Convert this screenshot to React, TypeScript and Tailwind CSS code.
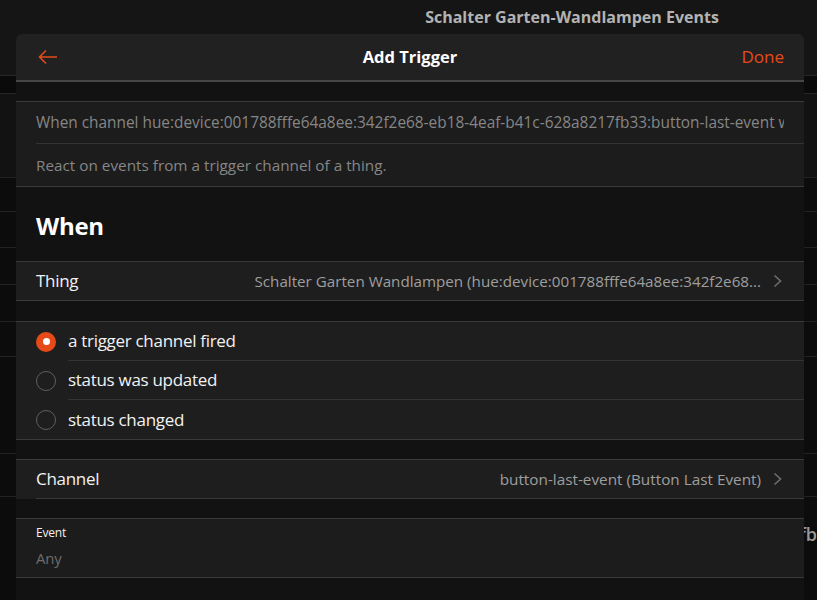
import React from "react";

const font = { fontFamily: '"Open Sans", "Noto Sans", sans-serif' };

function Chevron() {
  return (
    <svg width="9" height="14" viewBox="0 0 9 14" className="shrink-0">
      <path d="M1.5 1.5l6 5.5-6 5.5" fill="none" stroke="#6e6e6e" strokeWidth="1.6" />
    </svg>
  );
}

function Radio({ checked }: { checked?: boolean }) {
  if (checked) {
    return (
      <span className="w-5 h-5 rounded-full bg-[#e64a19] flex items-center justify-center shrink-0">
        <span className="w-[7px] h-[7px] rounded-full bg-white" />
      </span>
    );
  }
  return <span className="w-5 h-5 rounded-full border-[1.5px] border-[#5f5f5f] shrink-0" />;
}

export default function App() {
  const options = [
    { label: "a trigger channel fired", checked: true },
    { label: "status was updated" },
    { label: "status changed" },
  ];

  return (
    <div className="relative w-[817px] h-[600px] overflow-hidden bg-[#0c0c0c] text-white" style={font}>
      {/* page behind the dialog */}
      <div className="flex flex-col">
        <div className="h-[76px] bg-[#151515] border-b border-[#262626] flex items-start">
          <div className="h-[34px] w-full pl-[327px] flex items-center justify-center text-[16px] font-bold text-[#b3b3b3]">
            Schalter Garten-Wandlampen Events
          </div>
        </div>
        <div className="h-[18px] bg-[#0a0a0a] border-b border-[#262626]" />
        <div className="h-[84px] bg-[#121212] border-b border-[#222]" />
        <div className="h-[34px] border-b border-[#222]" />
        <div className="h-[36px] border-b border-[#222]" />
        <div className="h-[37px] border-b border-[#222]" />
        <div className="h-[37px] border-b border-[#222]" />
        <div className="h-[35px] border-b border-[#222]" />
        <div className="h-[97px] border-b border-[#222]" />
        <div className="h-[43px] border-b border-[#222]" />
        <div className="h-[74px] flex items-center justify-end text-[18px] text-[#9a9a9a] font-semibold">
          fb
        </div>
      </div>

      {/* dialog */}
      <div className="absolute left-4 right-[13px] top-[34px] bottom-0 rounded-t-md overflow-hidden bg-[#121212] flex flex-col">
        <div className="h-[48px] shrink-0 bg-[#212121] border-b-2 border-[#474747] flex items-center justify-between pl-[22px] pr-5 relative">
          <svg width="20" height="16" viewBox="0 0 20 16">
            <path d="M19 8H2M8 1.5L1.5 8 8 14.5" fill="none" stroke="#e64a19" strokeWidth="1.6" />
          </svg>
          <span className="absolute left-0 right-0 text-center text-[16.5px] font-bold pointer-events-none">
            Add Trigger
          </span>
          <span className="text-[17px] text-[#e64a19]">Done</span>
        </div>

        <div className="h-[19px] shrink-0" />

        <div className="bg-[#1c1c1c] border-y border-[#3a3a3a] shrink-0">
          <div className="pl-5">
            <div className="h-[42px] pr-5 flex items-center border-b border-[#333]">
              <div className="text-[15.4px] text-[#868686] whitespace-nowrap overflow-hidden">
                When channel hue:device:001788fffe64a8ee:342f2e68-eb18-4eaf-b41c-628a8217fb33:button-last-event was triggered
              </div>
            </div>
          </div>
          <div className="h-[42px] pl-5 flex items-center text-[15.3px] text-[#868686]">
            React on events from a trigger channel of a thing.
          </div>
        </div>

        <div className="h-[74px] shrink-0 pl-5 pt-[23px] text-[24px] font-bold leading-8 tracking-[-0.3px]">When</div>

        <div className="bg-[#1e1e1e] border-y border-[#3a3a3a] h-[40px] shrink-0 pl-5 pr-[22px] flex items-center gap-3">
          <span className="text-[17px] text-[#f2f2f2] flex-1 tracking-[-0.3px]">Thing</span>
          <span className="text-[15.2px] text-[#9e9e9e] whitespace-nowrap">
            Schalter Garten Wandlampen (hue:device:001788fffe64a8ee:342f2e68...
          </span>
          <Chevron />
        </div>

        <div className="h-5 shrink-0" />

        <div className="bg-[#1e1e1e] border-y border-[#3a3a3a] shrink-0">
          {options.map((o, i) => (
            <div key={o.label} className="h-[39px] pl-5 flex items-center gap-3">
              <Radio checked={o.checked} />
              <div
                className={
                  "flex-1 h-full flex items-center text-[17px] text-[#f2f2f2] tracking-[-0.3px] " +
                  (i < options.length - 1 ? "border-b border-[#333]" : "")
                }
              >
                {o.label}
              </div>
            </div>
          ))}
        </div>

        <div className="h-[19px] shrink-0" />

        <div className="bg-[#1e1e1e] border-t border-[#3a3a3a] pl-5 shrink-0">
          <div className="h-[39px] pr-[22px] flex items-center gap-3 border-b border-[#3a3a3a]">
            <span className="text-[17px] text-[#f2f2f2] flex-1 tracking-[-0.3px]">Channel</span>
            <span className="text-[15.3px] text-[#9e9e9e] whitespace-nowrap">
              button-last-event (Button Last Event)
            </span>
            <Chevron />
          </div>
        </div>

        <div className="h-[19px] shrink-0" />

        <div className="bg-[#1c1c1c] border-y border-[#3a3a3a] h-[60px] shrink-0 pl-5 pt-[6px] flex flex-col">
          <span className="text-[12px] leading-4 text-[#f2f2f2] tracking-[-0.2px]">Event</span>
          <span className="text-[15px] leading-6 mt-[5px] text-[#6c6c6c] tracking-[-0.2px]">Any</span>
        </div>
      </div>
    </div>
  );
}
